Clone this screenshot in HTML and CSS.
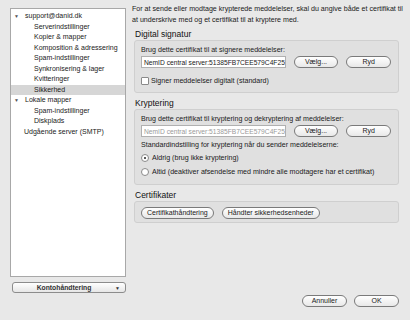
FILE: index.html
```html
<!DOCTYPE html>
<html>
<head>
<meta charset="utf-8">
<link rel="stylesheet" href="styles.css">
</head>
<body>
<div class="window">
  <div class="side">
    <div class="tree">
      <div class="row top"><span class="tri">▼</span>support@danid.dk</div>
      <div class="row sub">Serverindstillinger</div>
      <div class="row sub">Kopier &amp; mapper</div>
      <div class="row sub">Komposition &amp; adressering</div>
      <div class="row sub">Spam-indstillinger</div>
      <div class="row sub">Synkronisering &amp; lager</div>
      <div class="row sub">Kvitteringer</div>
      <div class="row sub sel">Sikkerhed</div>
      <div class="row top"><span class="tri">▼</span>Lokale mapper</div>
      <div class="row sub">Spam-indstillinger</div>
      <div class="row sub">Diskplads</div>
      <div class="row top plain">Udgående server (SMTP)</div>
    </div>
    <div class="popup"><span class="pop-label">Kontohåndtering</span><span class="pop-arrow">▼</span></div>
  </div>
  <div class="main">
    <p class="intro">For at sende eller modtage krypterede meddelelser, skal du angive både et certifikat til<br>at underskrive med og et certifikat til at kryptere med.</p>
    <div class="heading first">Digital signatur</div>
    <div class="group">
      <div class="label">Brug dette certifikat til at signere meddelelser:</div>
      <div class="fieldrow">
        <div class="field">NemID central server:51385FB7CEE579C4F25</div>
        <div class="btn w">Vælg...</div>
        <div class="btn w">Ryd</div>
      </div>
      <div class="check"><span class="box"></span>Signer meddelelser digitalt (standard)</div>
    </div>
    <div class="heading">Kryptering</div>
    <div class="group">
      <div class="label">Brug dette certifikat til kryptering og dekryptering af meddelelser:</div>
      <div class="fieldrow">
        <div class="field dim">NemID central server:51385FB7CEE579C4F25</div>
        <div class="btn w">Vælg...</div>
        <div class="btn w">Ryd</div>
      </div>
      <div class="label std">Standardindstilling for kryptering når du sender meddelelserne:</div>
      <div class="radio first"><span class="rb on"></span>Aldrig (brug ikke kryptering)</div>
      <div class="radio"><span class="rb"></span>Altid (deaktiver afsendelse med mindre alle modtagere har et certifikat)</div>
    </div>
    <div class="heading">Certifikater</div>
    <div class="group certs">
      <div class="btn">Certifikathåndtering</div>
      <div class="btn">Håndter sikkerhedsenheder</div>
    </div>
    <div class="footer">
      <div class="btn w">Annuller</div>
      <div class="btn w">OK</div>
    </div>
  </div>
</div>
</body>
</html>
```
FILE: styles.css
```css
html, body {
  margin: 0;
  padding: 0;
  background: #e8e8e8;
}
body {
  font-family: "Liberation Sans", Arial, sans-serif;
  font-size: 7px;
  color: #1a1a1a;
}
.window {
  width: 410px;
  height: 320px;
  box-sizing: border-box;
  padding: 4px 11px 0 10px;
  display: flex;
  gap: 6px;
}
.side {
  width: 116px;
  flex: none;
  display: flex;
  flex-direction: column;
  padding-top: 4px;
}
.tree {
  height: 269px;
  background: #fff;
  border: 1px solid #a8a8a8;
  box-sizing: border-box;
  padding-top: 2px;
}
.row {
  height: 10.5px;
  line-height: 10.5px;
  white-space: nowrap;
  font-size: 7px;
}
.row.top { padding-left: 3px; }
.row.top.plain { padding-left: 13px; }
.tri {
  display: inline-block;
  width: 11px;
  font-size: 5px;
  color: #555;
}
.row.sub { padding-left: 23px; }
.row.sel { background: #d6d6d6; }
.popup {
  margin-top: 5px;
  margin-left: 2px;
  height: 11px;
  border: 1px solid #8c8c8c;
  border-radius: 3px;
  background: linear-gradient(#ffffff, #e6e6e6);
  display: flex;
  align-items: center;
  font-size: 6.8px;
  font-weight: bold;
  color: #333;
  box-sizing: border-box;
}
.pop-label { flex: 1; text-align: center; }
.pop-arrow { font-size: 5px; padding-right: 5px; }
.main {
  flex: 1;
  min-width: 0;
  display: flex;
  flex-direction: column;
}
.intro {
  margin: 0;
  line-height: 11px;
  font-size: 7.1px;
  white-space: nowrap;
}
.heading {
  font-size: 8.5px;
  line-height: 11px;
  margin: 5px 0 0 3px;
  color: #111;
}
.heading.first { margin-top: 3px; }
.group {
  margin-left: 2px;
  background: #e0e0e0;
  border: 1px solid #cfcfcf;
  border-radius: 3px;
  padding: 4px 7px 5px 6px;
  display: flex;
  flex-direction: column;
  font-size: 7.1px;
}
.label { line-height: 10px; }
.label.std { margin-top: 3px; }
.fieldrow {
  display: flex;
  align-items: center;
  gap: 8px;
  margin-top: 1px;
}
.field {
  width: 146px;
  height: 12px;
  line-height: 12px;
  background: #fff;
  border: 1px solid #b0b0b0;
  box-sizing: border-box;
  padding-left: 2px;
  white-space: nowrap;
  overflow: hidden;
  font-size: 6.7px;
}
.field.dim { color: #9a9a9a; }
.btn {
  height: 12px;
  line-height: 10px;
  border: 1px solid #7a7a7a;
  border-radius: 6px;
  background: linear-gradient(#ffffff, #e8e8e8);
  box-sizing: border-box;
  text-align: center;
  padding: 0 5px;
  white-space: nowrap;
  font-size: 7px;
}
.btn.w { width: 45px; }
.check, .radio {
  display: flex;
  align-items: center;
  height: 14px;
}
.check { margin-top: 6px; height: 13px; }
.box {
  width: 6px;
  height: 6px;
  border: 1px solid #8a8a8a;
  border-radius: 1px;
  background: #fff;
  margin-right: 2px;
}
.rb {
  width: 6px;
  height: 6px;
  border: 1px solid #8a8a8a;
  border-radius: 50%;
  background: #fff;
  margin-right: 3px;
  position: relative;
}
.rb.on::after {
  content: "";
  position: absolute;
  left: 2px;
  top: 2px;
  width: 2px;
  height: 2px;
  border-radius: 50%;
  background: #222;
}
.radio.first { margin-top: 1px; }
.group.certs {
  flex-direction: row;
  gap: 8px;
  padding: 5px 6px 3px;
}
.footer {
  margin-top: auto;
  display: flex;
  justify-content: flex-end;
  gap: 7px;
  padding-bottom: 13px;
}
```
